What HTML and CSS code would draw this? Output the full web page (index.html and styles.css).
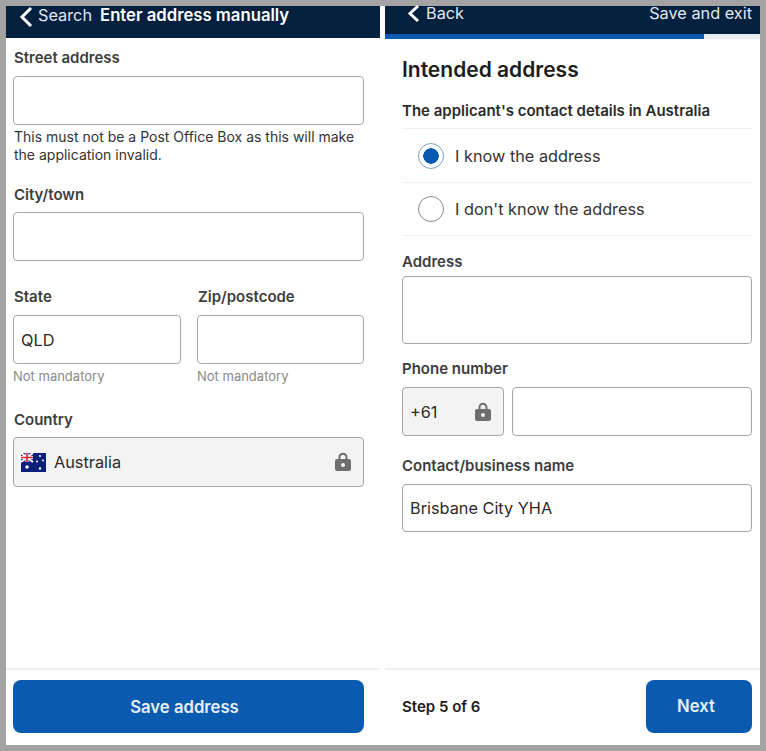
FILE: index.html
```html
<!DOCTYPE html>
<html lang="en">
<head>
    <meta charset="UTF-8">
    <meta name="viewport" content="width=device-width, initial-scale=1.0">
    <title>Enter address</title>
    <link rel="stylesheet" href="styles.css">
</head>
<body>
    <div class="frame">
        <section class="panel left-panel">
            <header class="topbar">
                <svg class="chevron" width="14" height="22" viewBox="0 0 14 22"><path d="M12 2 L3 11 L12 20" fill="none" stroke="#fff" stroke-width="3"/></svg>
                <span class="back-text">Search</span>
                <span class="topbar-title">Enter address manually</span>
            </header>

            <div class="form">
                <label class="label street-label">Street address</label>
                <div class="input"></div>
                <p class="hint">This must not be a Post Office Box as this will make the application invalid.</p>

                <label class="label city-label">City/town</label>
                <div class="input"></div>

                <div class="two-col">
                    <div>
                        <label class="label">State</label>
                        <div class="input">QLD</div>
                        <p class="optional">Not mandatory</p>
                    </div>
                    <div>
                        <label class="label">Zip/postcode</label>
                        <div class="input"></div>
                        <p class="optional">Not mandatory</p>
                    </div>
                </div>

                <label class="label country-label">Country</label>
                <div class="input locked country-input">
                    <svg class="flag" width="25" height="19" viewBox="0 0 25 19">
                        <rect width="25" height="19" fill="#0a1f7a"/>
                        <rect width="12" height="9" fill="#27348b"/>
                        <path d="M0 0 L12 9 M12 0 L0 9" stroke="#fff" stroke-width="2"/>
                        <path d="M6 0 V9 M0 4.5 H12" stroke="#fff" stroke-width="3"/>
                        <path d="M6 0 V9 M0 4.5 H12" stroke="#d8232f" stroke-width="1.6"/>
                        <circle cx="6" cy="14" r="1.8" fill="#fff"/>
                        <circle cx="19" cy="3" r="1" fill="#fff"/>
                        <circle cx="22" cy="7.5" r="1" fill="#fff"/>
                        <circle cx="16" cy="8.5" r="1" fill="#fff"/>
                        <circle cx="19" cy="15.5" r="1.2" fill="#fff"/>
                    </svg>
                    <span class="grow">Australia</span>
                    <svg class="lock" width="18" height="20" viewBox="0 0 18 20"><path d="M5.5 7 V5.2 a3.5 3.5 0 0 1 7 0 V7" fill="none" stroke="#6e6e6e" stroke-width="2"/><rect x="1" y="7" width="16" height="12" rx="2" fill="#6e6e6e"/><circle cx="9" cy="13" r="2" fill="#f3f3f3"/></svg>
                </div>
            </div>

            <footer class="footer">
                <button class="btn btn-wide">Save address</button>
            </footer>
        </section>

        <section class="panel right-panel">
            <header class="topbar topbar-split">
                <span class="back-group">
                    <svg class="chevron" width="13" height="19" viewBox="0 0 13 19"><path d="M11 2 L3 9.5 L11 17" fill="none" stroke="#fff" stroke-width="3"/></svg>
                    <span class="back-text">Back</span>
                </span>
                <span class="back-text">Save and exit</span>
            </header>
            <div class="progress"><div class="progress-fill" style="width: 85%"></div></div>

            <div class="form form-right">
                <h1 class="title">Intended address</h1>
                <h2 class="subtitle">The applicant's contact details in Australia</h2>

                <div class="radio-row">
                    <span class="radio radio-on"></span>
                    <span>I know the address</span>
                </div>
                <div class="radio-row">
                    <span class="radio"></span>
                    <span>I don't know the address</span>
                </div>

                <label class="label address-label">Address</label>
                <div class="input textarea"></div>

                <label class="label phone-label">Phone number</label>
                <div class="phone-row">
                    <div class="input locked phone-code">
                        <span class="grow">+61</span>
                        <svg class="lock" width="18" height="20" viewBox="0 0 18 20"><path d="M5.5 7 V5.2 a3.5 3.5 0 0 1 7 0 V7" fill="none" stroke="#6e6e6e" stroke-width="2"/><rect x="1" y="7" width="16" height="12" rx="2" fill="#6e6e6e"/><circle cx="9" cy="13" r="2" fill="#f3f3f3"/></svg>
                    </div>
                    <div class="input phone-number"></div>
                </div>

                <label class="label contact-label">Contact/business name</label>
                <div class="input contact-input">Brisbane City YHA</div>
            </div>

            <footer class="footer footer-split">
                <span class="step">Step 5 of 6</span>
                <button class="btn btn-next">Next</button>
            </footer>
        </section>
    </div>
</body>
</html>
```

FILE: styles.css
```css
* {
    box-sizing: border-box;
}

html, body {
    margin: 0;
    padding: 0;
    height: 751px;
    overflow: hidden;
}

body {
    background: #a3a3a3;
    font-family: 'Inter', 'Liberation Sans', sans-serif;
    color: #2b2b2b;
}

.frame {
    display: grid;
    grid-template-columns: 379px 375px;
    height: 739px;
    margin: 6px;
    background: #fff;
}

.panel {
    display: flex;
    flex-direction: column;
    height: 100%;
}

.left-panel {
    padding-right: 5px;
}

/* Top bars */
.topbar {
    display: flex;
    align-items: flex-start;
    flex: none;
    height: 32px;
    padding-left: 13px;
    background: #03203f;
    color: #fff;
}

.left-panel .chevron {
    margin-right: 5px;
}

.back-text {
    color: #e3e8ee;
    font-size: 16.3px;
    line-height: 19px;
}

.topbar-title {
    margin-left: 8px;
    font-size: 16.7px;
    font-weight: 600;
    line-height: 19px;
}

.topbar-split {
    align-items: center;
    justify-content: space-between;
    height: 28px;
    padding: 0 8px 14px 22px;
}

.back-group {
    display: flex;
    align-items: center;
    gap: 6px;
}

.progress {
    flex: none;
    height: 5px;
    background: #e9ebef;
}

.progress-fill {
    height: 100%;
    background: #0a5bb0;
}

/* Form */
.form {
    flex: 1;
    padding: 0 16px 0 7px;
}

.form-right {
    padding: 0 8px 0 17px;
}

.label {
    display: block;
    font-size: 15px;
    font-weight: 600;
    line-height: 18px;
    color: #3d3d3d;
}

.left-panel .label,
.hint {
    padding-left: 1px;
}

.street-label {
    margin-top: 11px;
    margin-bottom: 9px;
}

.input {
    display: flex;
    align-items: center;
    height: 49px;
    padding: 0 7px;
    background: #fff;
    border: 1px solid #a6a6a6;
    border-radius: 4px;
    font-size: 16.3px;
    color: #2b2b2b;
}

.locked {
    background: #f3f3f3;
}

.grow {
    flex: 1;
}

.hint {
    margin: 3px 0 0;
    font-size: 14px;
    line-height: 18px;
    color: #333;
}

.city-label {
    margin-top: 22px;
    margin-bottom: 8px;
}

.two-col {
    display: grid;
    grid-template-columns: 168px 167px;
    gap: 16px;
    margin-top: 27px;
}

.two-col .label {
    margin-bottom: 9px;
}

.optional {
    margin: 4px 0 0;
    font-size: 13px;
    line-height: 16px;
    color: #8a8a8a;
}

.country-label {
    margin-top: 27px;
    margin-bottom: 8px;
}

.country-input {
    height: 50px;
    padding-right: 11px;
}

.flag {
    margin-right: 8px;
}

.lock {
    flex: none;
}

/* Right panel content */
.title {
    margin: 17px 0 0;
    font-size: 21px;
    font-weight: 600;
    line-height: 28px;
    color: #1c1c1c;
}

.subtitle {
    margin: 18px 0 8px;
    font-size: 15px;
    font-weight: 600;
    line-height: 18px;
    color: #2b2b2b;
}

.radio-row {
    display: flex;
    align-items: center;
    gap: 11px;
    height: 54px;
    padding-left: 16px;
    border-top: 1px solid #f0f0f0;
    font-size: 16.3px;
    color: #333;
}

.radio-row + .radio-row {
    height: 54px;
    border-bottom: 1px solid #f0f0f0;
}

.radio {
    width: 26px;
    height: 26px;
    border: 1.5px solid #8c8c8c;
    border-radius: 50%;
    background: #fff;
}

.radio-on {
    border-color: #7f9fbf;
    background: radial-gradient(circle, #0a5bb0 0 7.5px, #fff 8px);
}

.address-label {
    margin-top: 17px;
    margin-bottom: 5px;
}

.textarea {
    height: 68px;
}

.phone-label {
    margin-top: 16px;
    margin-bottom: 9px;
}

.phone-row {
    display: flex;
    gap: 8px;
}

.phone-code {
    flex: none;
    width: 102px;
    padding-right: 11px;
}

.phone-number {
    flex: 1;
}

.contact-label {
    margin-top: 21px;
    margin-bottom: 9px;
}

.contact-input {
    height: 48px;
}

/* Footer */
.footer {
    flex: none;
    height: 77px;
    padding: 10px 16px 13px 7px;
    border-top: 2px solid #f0f0f0;
}

.footer-split {
    display: flex;
    align-items: center;
    justify-content: space-between;
    padding: 10px 8px 13px 17px;
}

.step {
    font-size: 15px;
    font-weight: 600;
    color: #1c1c1c;
}

.btn {
    height: 53px;
    border: none;
    border-radius: 8px;
    background: #0a5bb0;
    color: #e6f0fa;
    font-family: inherit;
    font-size: 16.7px;
    font-weight: 600;
}

.btn-wide {
    width: 100%;
    padding-right: 14px;
}

.btn-next {
    width: 106px;
    padding-right: 12px;
}
```
